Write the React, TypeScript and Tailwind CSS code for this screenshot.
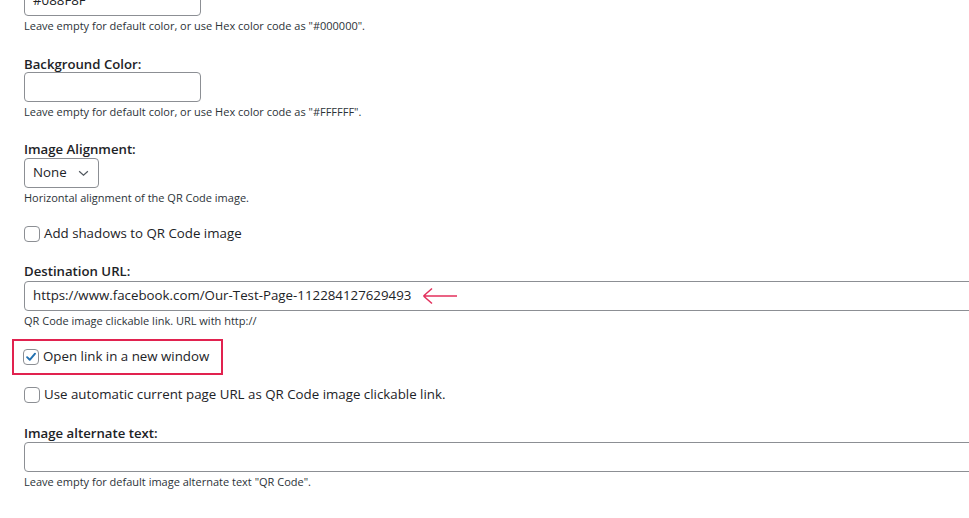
import React from "react";

const font = { fontFamily: '"Open Sans", "Noto Sans", sans-serif' };

function Box({ checked = false }: { checked?: boolean }) {
  return (
    <span className="flex h-4 w-4 shrink-0 items-center justify-center rounded-[4px] border border-[#8c8f94] bg-white">
      {checked && (
        <svg viewBox="0 0 16 16" className="h-[14px] w-[14px]">
          <path
            d="M3.5 8.2 L6.6 11.2 L12.6 4.2"
            fill="none"
            stroke="#2271b1"
            strokeWidth="2.2"
            strokeLinecap="round"
            strokeLinejoin="round"
          />
        </svg>
      )}
    </span>
  );
}

function Check({ label, checked }: { label: string; checked?: boolean }) {
  return (
    <label className="flex h-5 items-center gap-[4px] text-[13.3px] text-[#1d2327]">
      <Box checked={checked} />
      <span>{label}</span>
    </label>
  );
}

function Label({ children }: { children: React.ReactNode }) {
  return (
    <div className="h-4 text-[13.2px] font-semibold leading-4 text-[#1d2327]">
      {children}
    </div>
  );
}

function Help({ children }: { children: React.ReactNode }) {
  return (
    <p className="mt-[3px] h-[14px] text-[11px] leading-[14px] text-[#2c3338]">
      {children}
    </p>
  );
}

export default function App() {
  return (
    <div
      className="h-[518px] w-[969px] overflow-hidden bg-white pl-6 text-[#1d2327]"
      style={font}
    >
      {/* foreground colour, clipped at the top */}
      <div className="-mt-[14px] flex h-[30px] w-[177px] items-center rounded-[4px] border border-[#8c8f94] px-2 text-[13.3px]">
        #088F8F
      </div>
      <Help>Leave empty for default color, or use Hex color code as "#000000".</Help>

      <div className="mt-[23px]">
        <Label>Background Color:</Label>
        <div className="h-[30px] w-[177px] rounded-[4px] border border-[#8c8f94]" />
        <Help>Leave empty for default color, or use Hex color code as "#FFFFFF".</Help>
      </div>

      <div className="mt-[22px]">
        <Label>Image Alignment:</Label>
        <div className="mt-px flex h-[30px] w-[75px] items-center justify-between rounded-[4px] border border-[#8c8f94] pl-2 pr-[9px] text-[13.3px]">
          <span>None</span>
          <svg viewBox="0 0 12 8" className="h-[7px] w-[11px]">
            <path d="M1 1.5 L6 6 L11 1.5" fill="none" stroke="#50575e" strokeWidth="1.4" />
          </svg>
        </div>
        <Help>Horizontal alignment of the QR Code image.</Help>
      </div>

      <div className="mt-[19px]">
        <Check label="Add shadows to QR Code image" />
      </div>

      <div className="mt-[19px]">
        <Label>Destination URL:</Label>
        <div className="relative mt-[2px] flex h-[30px] w-[1000px] items-center rounded-[4px] border border-[#8c8f94] pl-2 text-[13.3px]">
          <span>https://www.facebook.com/Our-Test-Page-112284127629493</span>
          <svg viewBox="0 0 36 18" className="absolute left-[397px] top-[5px] h-[18px] w-[36px]">
            <path
              d="M1.5 9 H35 M1.5 9 L10 1.5 M1.5 9 L10 16.5"
              fill="none"
              stroke="#e3305c"
              strokeWidth="1.5"
            />
          </svg>
        </div>
        <Help>QR Code image clickable link. URL with http://</Help>
      </div>

      <div className="-ml-3 mt-[11px] flex h-9 w-[211px] items-center border-2 border-[#e1224f] pl-[9px]">
        <Check label="Open link in a new window" checked />
      </div>

      <div className="mt-[10px]">
        <Check label="Use automatic current page URL as QR Code image clickable link." />
      </div>

      <div className="mt-5">
        <Label>Image alternate text:</Label>
        <div className="mt-px h-[30px] w-[1000px] rounded-[4px] border border-[#8c8f94]" />
        <Help>Leave empty for default image alternate text "QR Code".</Help>
      </div>
    </div>
  );
}
